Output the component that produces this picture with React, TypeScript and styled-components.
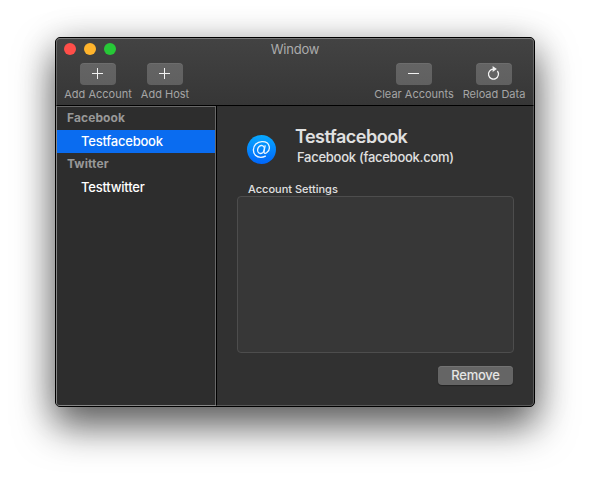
import React from "react";
import styled, { createGlobalStyle } from "styled-components";

const GlobalStyle = createGlobalStyle`
  * { box-sizing: border-box; }
  html, body { margin: 0; background: #fff; }
  body {
    width: 590px;
    height: 480px;
    overflow: hidden;
    font-family: Inter, "Liberation Sans", sans-serif;
    -webkit-font-smoothing: antialiased;
  }
`;

const Desktop = styled.main`
  width: 590px;
  height: 480px;
  padding: 37px 55px 73px;
  overflow: hidden;
`;

const WindowFrame = styled.section`
  position: relative;
  display: flex;
  flex-direction: column;
  width: 480px;
  height: 370px;
  border: 1px solid #000;
  border-radius: 5px;
  background: #313131;
  overflow: hidden;
  box-shadow: 0 19px 38px 1px rgba(0, 0, 0, 0.58), 0 4px 36px rgba(0, 0, 0, 0.18);

  &::after {
    content: "";
    position: absolute;
    inset: 0;
    border: 1px solid rgba(255, 255, 255, 0.2);
    border-top-color: rgba(255, 255, 255, 0.3);
    border-radius: 4px;
    pointer-events: none;
  }
`;

const Header = styled.header`
  height: 68px;
  flex: none;
  border-bottom: 1px solid #000;
  background: linear-gradient(#434343, #363636);
`;

const TitleBar = styled.div`
  display: grid;
  grid-template-columns: 60px 1fr 60px;
  align-items: center;
  height: 22px;
`;

const Lights = styled.div`
  display: flex;
  gap: 8px;
  padding-left: 8px;
`;

const Light = styled.span<{ $color: string }>`
  width: 12px;
  height: 12px;
  flex: none;
  border-radius: 50%;
  background: ${(p) => p.$color};
`;

const WindowTitle = styled.div`
  text-align: center;
  color: #acacac;
  font-size: 13px;
  line-height: 22px;
  letter-spacing: -0.2px;
`;

const Toolbar = styled.div`
  display: flex;
  gap: 8px;
  padding: 3px 8px 0;
`;

const Spacer = styled.div`
  flex: 1;
`;

const ToolItem = styled.div<{ $width: number }>`
  display: flex;
  flex-direction: column;
  align-items: center;
  width: ${(p) => p.$width}px;
`;

const ToolButton = styled.button`
  display: grid;
  place-items: center;
  width: 36px;
  height: 22px;
  padding: 0;
  border: 0;
  border-radius: 4px;
  color: #f2f2f2;
  background: linear-gradient(#646464, #606060);
  box-shadow: inset 0 1px 0 rgba(255, 255, 255, 0.06);
`;

const ToolLabel = styled.span`
  margin-top: 2px;
  white-space: nowrap;
  color: #a5a5a5;
  font-size: 11px;
  line-height: 14px;
`;

const Body = styled.div`
  display: flex;
  flex: 1;
  min-height: 0;
`;

const Sidebar = styled.nav`
  width: 161px;
  flex: none;
  border-right: 1px solid #000;
  background: #2d2d2d;
`;

const List = styled.div`
  height: 100%;
  border: 1px solid #686868;
`;

const GroupName = styled.div`
  height: 23px;
  padding-left: 10px;
  color: #989898;
  font-size: 12px;
  font-weight: 700;
  line-height: 22px;
  letter-spacing: 0.1px;
`;

const Account = styled.div<{ $selected?: boolean }>`
  height: 23px;
  padding-left: 24px;
  color: #fff;
  background: ${(p) => (p.$selected ? "#0a6cf0" : "transparent")};
  font-size: 13px;
  font-weight: 500;
  line-height: 23px;
  letter-spacing: -0.22px;
`;

const Detail = styled.div`
  display: flex;
  flex: 1;
  flex-direction: column;
  min-width: 0;
  padding: 20px;
`;

const Profile = styled.div`
  display: flex;
  height: 52px;
`;

const Avatar = styled.div`
  width: 30px;
  height: 30px;
  margin: 8px 0 0 9px;
`;

const Names = styled.div`
  margin-left: 19px;
`;

const AccountName = styled.h1`
  margin: 0;
  color: #e0e0e0;
  font-size: 18px;
  font-weight: 600;
  line-height: 22px;
  letter-spacing: -0.5px;
`;

const HostName = styled.div`
  padding-left: 2px;
  color: #e0e0e0;
  font-size: 13px;
  font-weight: 500;
  line-height: 19px;
  letter-spacing: -0.27px;
`;

const SettingsLabel = styled.div`
  height: 18px;
  padding: 4px 0 0 11px;
  color: #e0e0e0;
  font-size: 11px;
  font-weight: 500;
  line-height: 15px;
`;

const SettingsBox = styled.div`
  width: 277px;
  height: 157px;
  border: 1px solid #4d4d4d;
  border-radius: 4px;
  background: #373737;
`;

const RemoveButton = styled.button`
  align-self: flex-end;
  width: 75px;
  height: 19px;
  margin: 13px 1px 0 0;
  padding: 0;
  border: 0;
  border-radius: 4px;
  color: #e5e5e5;
  background: #656565;
  box-shadow: inset 0 1px 0 #737373, 0 1px 1px rgba(0, 0, 0, 0.3);
  font: 500 13px/19px Inter, sans-serif;
  letter-spacing: -0.25px;
`;

const PlusIcon = () => (
  <svg width="12" height="12" viewBox="0 0 12 12" shapeRendering="crispEdges">
    <path d="M0 5.5h11M5.5 0v11" stroke="currentColor" />
  </svg>
);

const MinusIcon = () => (
  <svg width="12" height="12" viewBox="0 0 12 12" shapeRendering="crispEdges">
    <path d="M0 5.5h11" stroke="currentColor" />
  </svg>
);

const ReloadIcon = () => (
  <svg width="14" height="16" viewBox="0 0 14 16" fill="none">
    <path d="M10.4 5A5 5 0 1 1 6.4 3.1" stroke="currentColor" strokeWidth="1.25" />
    <path d="M5.6 0.1L9.9 3L5.6 5.9Z" fill="currentColor" />
  </svg>
);

const AtBadge = () => (
  <svg width="32" height="32" viewBox="0 0 32 32">
    <defs>
      <linearGradient id="badge" x2="0" y2="1">
        <stop stopColor="#08a9ff" />
        <stop offset="1" stopColor="#0065fa" />
      </linearGradient>
    </defs>
    <circle cx="15.5" cy="15.5" r="14.5" fill="url(#badge)" />
    <g fill="none" stroke="#e9f5ff" strokeWidth="1.35" strokeLinecap="round">
      <ellipse cx="15" cy="15.5" rx="3.3" ry="4" transform="rotate(18 15 15.5)" />
      <path d="M19.1 11.8L18 17.2C17.6 19.2 19 19.9 20.6 18.8C22.7 17.3 23.8 14.8 23.2 12.3C22.4 9 19.5 7.4 15.9 7.6C11 7.8 7.5 11.2 7.4 15.8C7.3 20.5 10.4 23.3 14.8 23.3C16.6 23.3 18 22.9 19.4 22.2" />
    </g>
  </svg>
);

const leftTools = [
  { label: "Add Account", width: 68 },
  { label: "Add Host", width: 50 },
];

const rightTools = [
  { label: "Clear Accounts", width: 80, icon: <MinusIcon /> },
  { label: "Reload Data", width: 64, icon: <ReloadIcon /> },
];

export default function App() {
  return (
    <Desktop>
      <GlobalStyle />
      <WindowFrame>
        <Header>
          <TitleBar>
            <Lights>
              <Light $color="#ff4e49" />
              <Light $color="#ffb42c" />
              <Light $color="#27c837" />
            </Lights>
            <WindowTitle>Window</WindowTitle>
          </TitleBar>
          <Toolbar>
            {leftTools.map((t) => (
              <ToolItem key={t.label} $width={t.width}>
                <ToolButton aria-label={t.label}><PlusIcon /></ToolButton>
                <ToolLabel>{t.label}</ToolLabel>
              </ToolItem>
            ))}
            <Spacer />
            {rightTools.map((t) => (
              <ToolItem key={t.label} $width={t.width}>
                <ToolButton aria-label={t.label}>{t.icon}</ToolButton>
                <ToolLabel>{t.label}</ToolLabel>
              </ToolItem>
            ))}
          </Toolbar>
        </Header>
        <Body>
          <Sidebar>
            <List>
              <GroupName>Facebook</GroupName>
              <Account $selected>Testfacebook</Account>
              <GroupName>Twitter</GroupName>
              <Account>Testtwitter</Account>
            </List>
          </Sidebar>
          <Detail>
            <Profile>
              <Avatar><AtBadge /></Avatar>
              <Names>
                <AccountName>Testfacebook</AccountName>
                <HostName>Facebook (facebook.com)</HostName>
              </Names>
            </Profile>
            <SettingsLabel>Account Settings</SettingsLabel>
            <SettingsBox />
            <RemoveButton>Remove</RemoveButton>
          </Detail>
        </Body>
      </WindowFrame>
    </Desktop>
  );
}
